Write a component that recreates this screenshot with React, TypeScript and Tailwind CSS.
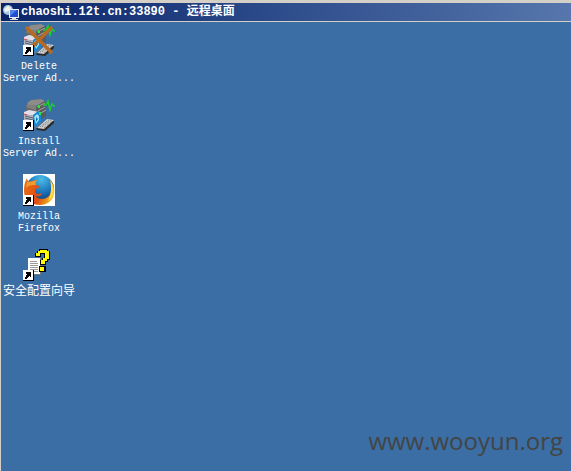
import type { ReactNode } from "react";

function ShortcutArrow() {
  return (
    <g shapeRendering="crispEdges">
      <rect x="0" y="21" width="11" height="11" fill="#000" />
      <rect x="0" y="21" width="10" height="10" fill="#fff" />
      <path d="M3 23h5v5h-1v-1h-1v1h-1v1h-1v1h-2v-2h1v-2h1v-1h-1v-1h-1z" fill="#000" />
    </g>
  );
}

function ServerDrawing() {
  return (
    <g>
      <path d="M4 4 8 1l10-1 4 3 1 3v11l-8 4-9-4-3-7z" fill="#4c4c4c" />
      <path d="M4 4 8 1l10-1 4 2-8 5-9-1z" fill="#8c8c8c" />
      <path d="m4 5 9 2v10l-8-3-2-5z" fill="#808080" />
      <path d="m3 8 9 3v4l-8-3z" fill="#686868" />
      <path d="m13 7 8-4 2 2v12l-8 4-2-4z" fill="#5b5b5b" />
      <path d="m14 8 8-4M15 12l7-4M16 15l7-4" stroke="#a5a5a5" />
      <path d="m1 13 5-2 11 2 1 11-5 5-12-5z" fill="#707986" />
      <path d="m1 13 5-2 10 2-4 4-11-2z" fill="#e2e0ea" />
      <path d="m1 15 10 2v10L1 24z" fill="#b0b5c4" />
      <path d="m2 17 8 2M2 19l8 2" stroke="#59616d" />
      <path d="m1 15 3 1" stroke="#e24b4b" />
      <path d="m10 16 5-4 3 3v8l-5 5-3-2z" fill="#1688d0" />
      <path d="m11 18 3-3 2 2v4l-3 4z" fill="#9be4fa" />
      <path d="m13 18 2 2-2 3z" fill="#1673b9" />
      <path d="m13 30 11-9 7 1v2l-9 8-8-1z" fill="#292929" />
      <path d="m14 29 10-9 7 1-10 9z" fill="#cfcfcf" />
      <path d="m17 28 9-7M19 28l9-7M21 29l8-7" stroke="#727272" strokeDasharray="1 1" />
      <path d="M16 6v3M17 13v3" stroke="#25e73c" strokeWidth="2" />
      <path d="M20 6h3l2-4 2 9 2-6 2 2h1" fill="none" stroke="#16d329" strokeWidth="1.5" />
    </g>
  );
}

function IconFrame({ children }: { children: ReactNode }) {
  return (
    <svg className="size-8 shrink-0" viewBox="0 0 32 32" aria-hidden="true">
      {children}
      <ShortcutArrow />
    </svg>
  );
}

function DeleteServerIcon() {
  return (
    <IconFrame>
      <ServerDrawing />
      <path d="m3 3 26 26M29 3 6 26" stroke="#b66a22" strokeWidth="3.5" />
    </IconFrame>
  );
}

function InstallServerIcon() {
  return (
    <IconFrame>
      <ServerDrawing />
    </IconFrame>
  );
}

function FirefoxIcon() {
  return (
    <IconFrame>
      <defs>
        <linearGradient id="fox" x1="0" y1="0.3" x2="1" y2="0.7">
          <stop offset="0" stopColor="#ea6c14" />
          <stop offset="0.55" stopColor="#dc4b12" />
          <stop offset="0.85" stopColor="#ef9a1c" />
          <stop offset="1" stopColor="#ffdc48" />
        </linearGradient>
        <radialGradient id="globe" cx="0.55" cy="0.15" r="0.85">
          <stop offset="0" stopColor="#4bbde8" />
          <stop offset="0.55" stopColor="#1b74b9" />
          <stop offset="1" stopColor="#123672" />
        </radialGradient>
      </defs>
      <rect width="32" height="32" fill="#fff" />
      <circle cx="17" cy="15" r="14" fill="url(#globe)" />
      <path d="M27 6c4 4 5 9 4 14-1 7-7 11-14 11C8 31 1 26 1 17 1 11 2 8 4 4c0 2 1 3 2 4 2-1 5-1 8-2-1 2-2 3-1 5l4 1c0 2-4 2-5 4 0 3 1 4 3 4l4-1c0 3-4 4-7 3 4 4 10 4 14 0 4-5 4-10 1-16z" fill="url(#fox)" />
      <path d="M27 6c5 6 5 16-2 21 3-6 4-14 2-21z" fill="#ffdc48" />
      <path d="M4 8c4 0 6-1 10-2-1 2-2 3-1 5-4 0-7 0-10 3z" fill="#f39a2c" />
    </IconFrame>
  );
}

function WizardIcon() {
  return (
    <IconFrame>
      <g shapeRendering="crispEdges">
        <path d="M5 9h13v17H5z" fill="#777" />
        <path d="M5 9h12v16H5z" fill="#fff" />
        <path d="M7 12h7M7 14h8M7 16h8M7 18h8M7 20h8M10 22h5" stroke="#999" />
        <path d="M12 4h2V2h2V0h9v2h2v9h-2v2h-2v3h-6v-5h2V9h2V5h-3v3h-6zM16 17h7v6h-7z" fill="#000" />
        <path d="M13 4h2V2h2V1h7v1h2v8h-2v2h-2v3h-4v-4h2V9h2V4h-5v3h-4zM17 18h4v4h-4z" fill="#ffff00" />
      </g>
    </IconFrame>
  );
}

function RemoteIcon() {
  return (
    <svg className="size-4 shrink-0" viewBox="0 0 16 16" aria-hidden="true">
      <circle cx="5" cy="6" r="5" fill="#a9c9df" />
      <path d="m1 5 4-3 3 2-2 3-4 1z" fill="#eef4ee" />
      <path d="M6 5h10v9H6z" fill="#e9eef8" />
      <path d="M7 6h8v7H7z" fill="#204ed0" />
      <path d="M7 6h7l-7 6z" fill="#5283ed" />
      <path d="M9 14h4v1H9zM7 15h8v1H7z" fill="#ddd" />
    </svg>
  );
}

const shortcuts = [
  { icon: <DeleteServerIcon />, lines: ["Delete", "Server Ad..."] },
  { icon: <InstallServerIcon />, lines: ["Install", "Server Ad..."] },
  { icon: <FirefoxIcon />, lines: ["Mozilla", "Firefox"] },
  { icon: <WizardIcon />, lines: ["安全配置向导"] },
];

export default function App() {
  return (
    <div className="flex min-h-screen flex-col border-l border-[#d4d0c8] bg-[#3a6ea5] font-['Liberation_Mono','Noto_Sans_CJK_SC',monospace] text-white">
      <header className="flex h-[22px] items-center gap-[2px] border-t-3 border-b border-t-[#d4d0c8] border-b-[#d4d0c8] bg-linear-to-r from-[#0a246a] to-[#5676ad] pl-[2px]">
        <RemoteIcon />
        <h1 className="text-[12px] leading-[18px] font-bold whitespace-pre">chaoshi.12t.cn:33890 - 远程桌面</h1>
      </header>
      <main className="flex grow flex-col justify-between">
        <ul className="flex w-[76px] flex-col gap-[14px] pt-[2px]">
          {shortcuts.map((item) => (
            <li key={item.lines.join(" ")}>
              <button type="button" className="flex w-full flex-col items-center gap-[5px]">
                {item.icon}
                <span className="flex flex-col whitespace-nowrap">
                  {item.lines.map((line) => (
                    <span
                      key={line}
                      className={/^[A-Z]/.test(line) ? "text-[10px] leading-3" : "text-[12px] leading-3"}
                    >
                      {line}
                    </span>
                  ))}
                </span>
              </button>
            </li>
          ))}
        </ul>
        <p className="self-end pr-2 pb-3.5 font-['Open_Sans',sans-serif] text-[24px] leading-8 text-[#444444]">
          www.wooyun.org
        </p>
      </main>
    </div>
  );
}
